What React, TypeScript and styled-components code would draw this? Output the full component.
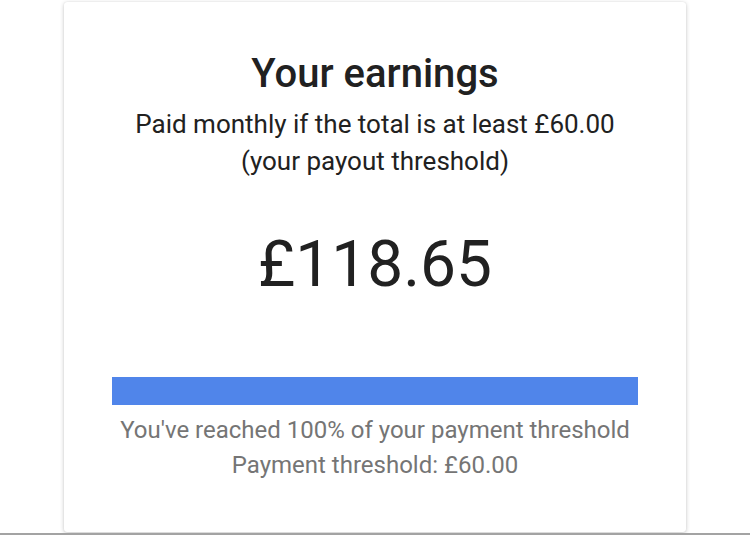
import React from 'react'
import styled, { createGlobalStyle } from 'styled-components'

const GlobalStyle = createGlobalStyle`
  html, body {
    margin: 0;
    padding: 0;
    background: #ffffff;
  }
  body {
    font-family: Roboto, "Noto Sans", sans-serif;
    -webkit-font-smoothing: antialiased;
  }
`

const Page = styled.div`
  width: 750px;
  height: 535px;
  display: flex;
  flex-direction: column;
  align-items: center;
  box-sizing: border-box;
  padding-top: 2px;
  overflow: hidden;
  border-bottom: 2px solid #a3a3a3;
`

const Card = styled.div`
  width: 622px;
  height: 530px;
  background: #ffffff;
  border-radius: 3px;
  box-shadow: 0 1px 4px rgba(0, 0, 0, 0.22), 0 0 1px rgba(0, 0, 0, 0.12);
  display: flex;
  flex-direction: column;
  align-items: center;
  box-sizing: border-box;
  padding: 48px 48px 0;
  text-align: center;
`

const Title = styled.h1`
  margin: 0;
  font-size: 40px;
  line-height: 48px;
  font-weight: 500;
  color: #212121;
`

const Subtitle = styled.p`
  margin: 8px 0 0;
  font-size: 26px;
  line-height: 37px;
  font-weight: 400;
  color: #212121;
  white-space: nowrap;
`

const Amount = styled.div`
  margin-top: 45px;
  font-size: 64px;
  line-height: 80px;
  font-weight: 400;
  color: #212121;
`

const Track = styled.div`
  margin-top: 72px;
  width: 100%;
  height: 28px;
  background: #e0e0e0;
`

const Fill = styled.div`
  height: 100%;
  background: #5085ea;
`

const Note = styled.p`
  margin: 8px 0 0;
  font-size: 24px;
  line-height: 35px;
  color: #757575;
  white-space: nowrap;
`

export default function App() {
  const percent = 100
  return (
    <>
      <GlobalStyle />
      <Page>
        <Card>
          <Title>Your earnings</Title>
          <Subtitle>
            Paid monthly if the total is at least £60.00
            <br />
            (your payout threshold)
          </Subtitle>
          <Amount>£118.65</Amount>
          <Track>
            <Fill style={{ width: `${percent}%` }} />
          </Track>
          <Note>
            You've reached {percent}% of your payment threshold
            <br />
            Payment threshold: £60.00
          </Note>
        </Card>
      </Page>
    </>
  )
}
